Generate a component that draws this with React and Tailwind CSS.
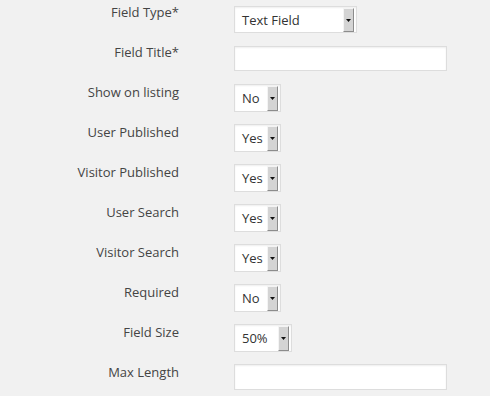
const rows = [
  { label: 'Field Type*', type: 'select', value: 'Text Field', width: 'w-[123px]', mt: 'mt-[6px]', h: 'h-[27px]' },
  { label: 'Field Title*', type: 'input', mt: 'mt-[6px]', h: 'h-[25px]' },
  { label: 'Show on listing', type: 'select', value: 'No', width: 'w-[47px]', mt: 'mt-[4px]', h: 'h-[28px]' },
  { label: 'User Published', type: 'select', value: 'Yes', width: 'w-[47px]', mt: 'mt-[4px]', h: 'h-[28px]' },
  { label: 'Visitor Published', type: 'select', value: 'Yes', width: 'w-[47px]', mt: 'mt-[4px]', h: 'h-[28px]' },
  { label: 'User Search', type: 'select', value: 'Yes', width: 'w-[47px]', mt: 'mt-[4px]', h: 'h-[28px]' },
  { label: 'Visitor Search', type: 'select', value: 'Yes', width: 'w-[47px]', mt: 'mt-[4px]', h: 'h-[28px]' },
  { label: 'Required', type: 'select', value: 'No', width: 'w-[47px]', mt: 'mt-[4px]', h: 'h-[28px]' },
  { label: 'Field Size', type: 'select', value: '50%', width: 'w-[58px]', mt: 'mt-[4px]', h: 'h-[28px]' },
  { label: 'Max Length', type: 'input', mt: 'mt-[4px]', h: 'h-[26px]' },
];

function FakeSelect({ value, width, h }) {
  return (
    <div className={`${width} ${h} flex items-stretch bg-white border border-[#dddddd] shadow-[inset_0_1px_2px_rgba(0,0,0,0.07)] pt-[1px] pr-[2px]`}>
      <span className="flex-1 pl-[7px] flex items-center text-[13px] text-[#333] leading-none">{value}</span>
      <span className="w-[11px] flex items-center justify-center bg-[#d4d4d4] border-l border-t border-l-[#f4f4f4] border-t-[#f4f4f4] border-r border-b border-r-[#8c8c8c] border-b-[#8c8c8c]">
        <svg width="5" height="3" viewBox="0 0 5 3">
          <path d="M0 0h5L2.5 3z" fill="#111" />
        </svg>
      </span>
    </div>
  );
}

export default function App() {
  return (
    <div className="w-[490px] h-[396px] overflow-hidden bg-[#f1f1f1] font-['Open_Sans',sans-serif]">
      {rows.map((row) => (
        <div key={row.label} className="flex h-[40px]">
          <div className="w-[179px] pt-[3px] text-right text-[13px] leading-[18px] text-[#444]">{row.label}</div>
          <div className={`ml-[55px] ${row.mt}`}>
            {row.type === 'select' ? (
              <FakeSelect value={row.value} width={row.width} h={row.h} />
            ) : (
              <div className={`w-[213px] ${row.h} bg-white border border-[#dddddd] shadow-[inset_0_1px_2px_rgba(0,0,0,0.07)]`} />
            )}
          </div>
        </div>
      ))}
    </div>
  );
}
